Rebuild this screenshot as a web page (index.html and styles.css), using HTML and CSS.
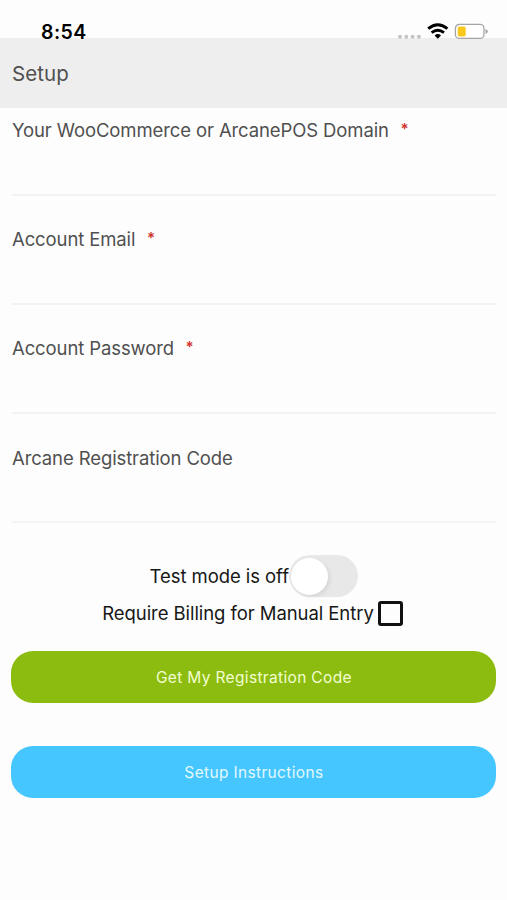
FILE: index.html
```html
<!DOCTYPE html>
<html lang="en">
<head>
<meta charset="utf-8">
<title>Setup</title>
<link rel="stylesheet" href="styles.css">
</head>
<body>
<div class="status">
  <span class="time">8:54</span>
  <svg class="status-icons" width="92" height="20" viewBox="0 0 92 20">
    <g fill="#c4c4c6"><circle cx="3" cy="13.8" r="2"/><circle cx="9.3" cy="13.8" r="2"/><circle cx="15.6" cy="13.8" r="2"/><circle cx="21.9" cy="13.8" r="2"/></g>
    <g fill="none" stroke="#000" stroke-width="2.9"><path d="M31.2 5.7 Q40.8 -2.3 50.4 5.7"/><path d="M34.6 9.6 Q40.8 4.7 47 9.6"/></g>
    <path d="M37.6 12.4 Q40.8 9.8 44 12.4 L40.8 15.8 Z"/>
    <rect x="58.4" y="1.4" width="28.6" height="14" rx="4" fill="#fff" stroke="#a5a5a5" stroke-width="1.3"/>
    <rect x="60.7" y="3.4" width="8" height="10" rx="1.6" fill="#f8c91c"/>
    <path d="M88.5 6 Q90.8 6.6 90.8 8.4 T88.5 10.8 Z" fill="#a5a5a5"/>
  </svg>
</div>
<header class="header"><h1>Setup</h1></header>
<main>
  <label class="field"><span class="label">Your WooCommerce or ArcanePOS Domain<span class="req">*</span></span><input type="text"></label>
  <label class="field"><span class="label">Account Email<span class="req">*</span></span><input type="email"></label>
  <label class="field"><span class="label">Account Password<span class="req">*</span></span><input type="password"></label>
  <label class="field"><span class="label">Arcane Registration Code</span><input type="text"></label>
  <div class="option test"><span class="test-text">Test mode is off</span><span class="switch"><span class="knob"></span></span></div>
  <div class="option billing"><span class="billing-text">Require Billing for Manual Entry</span><span class="check"></span></div>
  <button class="btn green">Get My Registration Code</button>
  <button class="btn blue">Setup Instructions</button>
</main>
</body>
</html>
```
FILE: styles.css
```css
* { box-sizing: border-box; }
body { margin: 0; height: 900px; background: #fdfdfd; font-family: Inter, "Liberation Sans", sans-serif; color: #505050; overflow: hidden; }
.status { position: relative; z-index: 1; height: 38.4px; padding: 22px 18px 0 41px; display: flex; justify-content: space-between; align-items: flex-start; }
.time { font-size: 19.5px; line-height: 20px; font-weight: 600; color: #000; letter-spacing: 0.4px; }
.status-icons { flex: none; display: block; margin-top: 1px; }
.header { height: 69.6px; background: #eee; padding: 1px 12px 0; display: flex; align-items: center; }
h1 { margin: 0; font-size: 20.5px; font-weight: 400; line-height: 26px; letter-spacing: .1px; }
main { padding: 0 11px 0 12px; }
.field { display: block; height: 109.2px; padding-top: 10px; }
.label { display: block; font-size: 18.5px; line-height: 24px; white-space: nowrap; letter-spacing: -.11px; }
.req { color: #d0322d; margin-left: 11.5px; font-size: 15px; line-height: 1; font-weight: 600; vertical-align: 3px; }
.field input { display: block; width: 100%; height: 53.7px; border: 0; border-bottom: 2px solid #f3f3f3; background: transparent; outline: 0; padding: 0; }
.option { display: flex; align-items: center; justify-content: center; color: #171717; font-size: 18.5px; white-space: nowrap; letter-spacing: -.07px; }
.test { height: 42px; margin-top: 10.4px; }
.switch { width: 69px; height: 42px; border-radius: 21px; background: #e8e8e8; padding: 2.5px 2px; margin-left: 0.5px; }
.knob { display: block; width: 37px; height: 37px; border-radius: 50%; background: #fff; box-shadow: 2px 2px 4px rgba(0,0,0,.08); }
.billing { height: 32px; padding-right: 3px; }
.check { width: 25px; height: 25px; margin-left: 4px; border: 3px solid #111; border-radius: 3px; }
.btn { display: block; width: 485px; height: 52px; margin: 0 0 0 -0.6px; padding: 1px 0 0; border: 0; border-radius: 22px; font: 400 15.5px/20px Inter, "Liberation Sans", sans-serif; letter-spacing: .34px; }
.green { margin-top: 22px; background: #8dbc10; color: #f2ffd0; }
.blue { margin-top: 43px; background: #46c6ff; color: #e2f8ff; }
```
